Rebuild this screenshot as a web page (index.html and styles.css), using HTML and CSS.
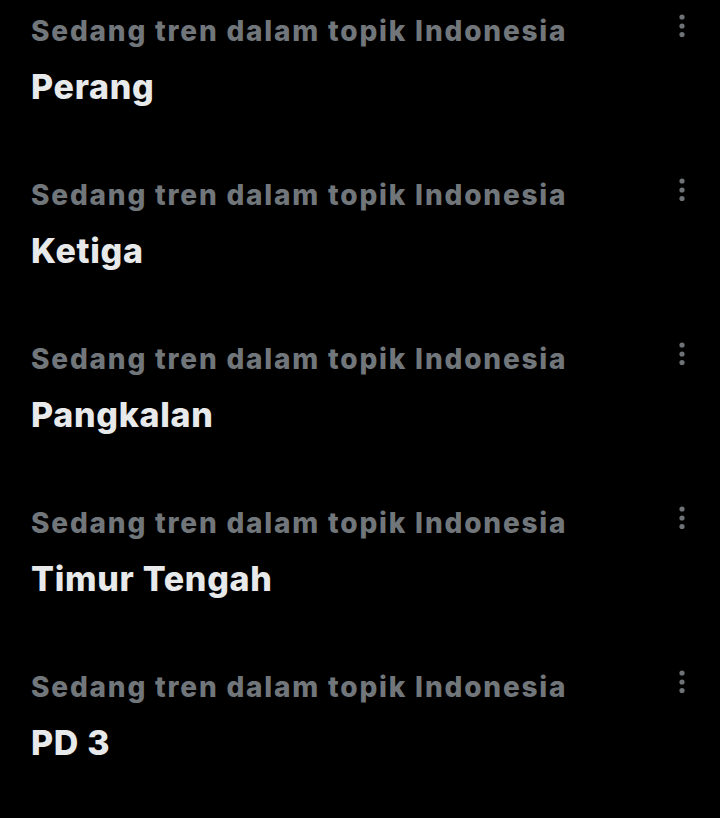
FILE: index.html
```html
<!DOCTYPE html>
<html lang="id">
<head>
    <meta charset="UTF-8">
    <meta name="viewport" content="width=device-width, initial-scale=1.0">
    <title>Tren</title>
    <link rel="stylesheet" href="styles.css">
</head>
<body>
    <div id="trends">
        <div class="trend">
            <div class="trend-text">
                <div class="trend-meta">Sedang tren dalam topik Indonesia</div>
                <div class="trend-name">Perang</div>
            </div>
            <div class="trend-more">
                <svg viewBox="0 0 20 24" width="20" height="24"><circle cx="10" cy="3" r="2.6"/><circle cx="10" cy="12" r="2.6"/><circle cx="10" cy="20.5" r="2.6"/></svg>
            </div>
        </div>
        <div class="trend">
            <div class="trend-text">
                <div class="trend-meta">Sedang tren dalam topik Indonesia</div>
                <div class="trend-name">Ketiga</div>
            </div>
            <div class="trend-more">
                <svg viewBox="0 0 20 24" width="20" height="24"><circle cx="10" cy="3" r="2.6"/><circle cx="10" cy="12" r="2.6"/><circle cx="10" cy="20.5" r="2.6"/></svg>
            </div>
        </div>
        <div class="trend">
            <div class="trend-text">
                <div class="trend-meta">Sedang tren dalam topik Indonesia</div>
                <div class="trend-name">Pangkalan</div>
            </div>
            <div class="trend-more">
                <svg viewBox="0 0 20 24" width="20" height="24"><circle cx="10" cy="3" r="2.6"/><circle cx="10" cy="12" r="2.6"/><circle cx="10" cy="20.5" r="2.6"/></svg>
            </div>
        </div>
        <div class="trend">
            <div class="trend-text">
                <div class="trend-meta">Sedang tren dalam topik Indonesia</div>
                <div class="trend-name">Timur Tengah</div>
            </div>
            <div class="trend-more">
                <svg viewBox="0 0 20 24" width="20" height="24"><circle cx="10" cy="3" r="2.6"/><circle cx="10" cy="12" r="2.6"/><circle cx="10" cy="20.5" r="2.6"/></svg>
            </div>
        </div>
        <div class="trend">
            <div class="trend-text">
                <div class="trend-meta">Sedang tren dalam topik Indonesia</div>
                <div class="trend-name">PD 3</div>
            </div>
            <div class="trend-more">
                <svg viewBox="0 0 20 24" width="20" height="24"><circle cx="10" cy="3" r="2.6"/><circle cx="10" cy="12" r="2.6"/><circle cx="10" cy="20.5" r="2.6"/></svg>
            </div>
        </div>
    </div>
</body>
</html>
```

FILE: styles.css
```css
body {
    background-color: #000000;
    font-family: 'Inter', 'Noto Sans', sans-serif;
    margin: 0;
    padding: 0;
    overflow: hidden;
}
#trends {
    display: flex;
    flex-direction: column;
}
.trend {
    display: flex;
    justify-content: space-between;
    align-items: flex-start;
    height: 164px;
    box-sizing: border-box;
    padding: 13px 28px 0 31px;
}
.trend-meta {
    color: #71767b;
    font-size: 28px;
    font-weight: 800;
    line-height: 36px;
    letter-spacing: 1.8px;
}
.trend-name {
    color: #e7e9ea;
    font-size: 34px;
    font-weight: 800;
    line-height: 44px;
    letter-spacing: 0.7px;
    margin-top: 16px;
}
.trend-more {
    margin-top: 1px;
}
.trend-more svg {
    display: block;
    fill: #6f7276;
}
```
